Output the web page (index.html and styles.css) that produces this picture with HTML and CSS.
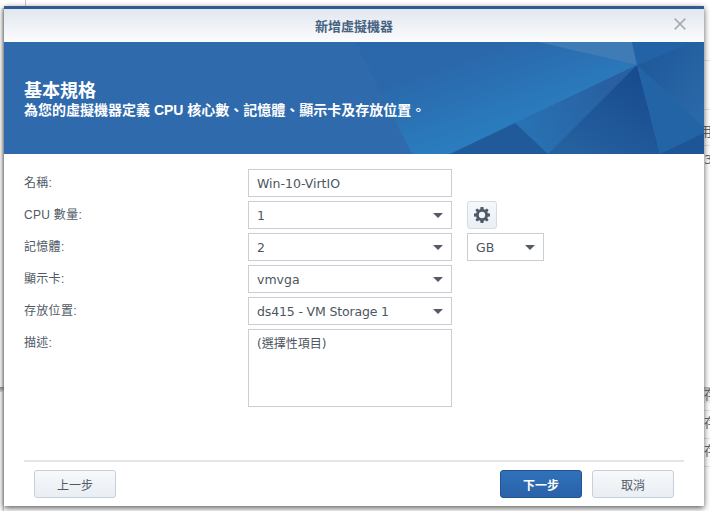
FILE: index.html
```html
<!DOCTYPE html>
<html lang="zh-Hant">
<head>
<meta charset="utf-8">
<title>新增虛擬機器</title>
<link rel="stylesheet" href="styles.css">
</head>
<body>
<div class="desktop">
  <div class="bg-vline"></div>
  <div class="bg-left-band"></div>
  <div class="bg-left-shadow"></div>
  <div class="bg-right">
    <div class="bg-line bg-line-1"></div>
    <div class="bg-line bg-line-2"></div>
    <div class="bg-line bg-line-3"></div>
    <div class="bg-band"></div>
    <div class="bg-line bg-line-4"></div>
    <div class="bg-line bg-line-5"></div>
    <div class="bg-line bg-line-6"></div>
    <span class="bg-text bg-t1">用</span>
    <span class="bg-text bg-t2">3</span>
    <span class="bg-text bg-t3">存</span>
    <span class="bg-text bg-t4">存</span>
    <span class="bg-text bg-t5">存</span>
  </div>

  <section class="modal">
    <header class="titlebar">
      <h1 class="title">新增虛擬機器</h1>
      <svg class="close" width="12" height="12" viewBox="0 0 12 12"><path d="M.7.7l10.6 10.6M11.3.7L.7 11.3" stroke="#a9adb2" stroke-width="1.7" fill="none"/></svg>
    </header>

    <div class="banner">
      <svg class="banner-art" viewBox="4 42 700 112" width="700" height="112" preserveAspectRatio="none">
        <defs>
          <linearGradient id="gMid" x1="490" y1="50" x2="515" y2="123" gradientUnits="userSpaceOnUse">
            <stop offset="0" stop-color="#2a68ab"/>
            <stop offset="1" stop-color="#2a7cbe"/>
          </linearGradient>
          <linearGradient id="gDark" x1="630" y1="70" x2="580" y2="154" gradientUnits="userSpaceOnUse">
            <stop offset="0" stop-color="#184c8f"/>
            <stop offset="1" stop-color="#25609f"/>
          </linearGradient>
          <linearGradient id="gRight" x1="640" y1="70" x2="704" y2="110" gradientUnits="userSpaceOnUse">
            <stop offset="0" stop-color="#1f5a9b"/>
            <stop offset="1" stop-color="#2a69a9"/>
          </linearGradient>
          <linearGradient id="gBot" x1="520" y1="125" x2="610" y2="85" gradientUnits="userSpaceOnUse">
            <stop offset="0" stop-color="#2872b3"/>
            <stop offset="1" stop-color="#2860a2"/>
          </linearGradient>
        </defs>
        <rect x="4" y="42" width="700" height="112" fill="#2f6aad"/>
        <polygon points="355,42 412,154 450,154 515,123 637,65 538,42" fill="url(#gMid)"/>
        <polygon points="515,123 637,65 548,154" fill="url(#gBot)"/>
        <polygon points="515,123 548,154 450,154" fill="#215a9b"/>
        <polygon points="637,65 548,154 660,154" fill="url(#gDark)"/>
        <polygon points="637,65 660,154 704,133 704,127" fill="#2264a6"/>
        <polygon points="660,154 704,133 704,154" fill="#1d5596"/>
        <polygon points="637,65 704,127 704,42 692,42" fill="url(#gRight)"/>
        <polygon points="538,42 632,42 637,65" fill="#3f7bb4"/>
        <polygon points="632,42 692,42 637,65" fill="#2263a7"/>
      </svg>
      <div class="banner-text">
        <h2 class="heading">基本規格</h2>
        <p class="subheading">為您的虛擬機器定義 CPU 核心數、記憶體、顯示卡及存放位置。</p>
      </div>
    </div>

    <div class="form">
      <div class="row">
        <div class="label">名稱:</div>
        <div class="field">Win-10-VirtIO</div>
      </div>
      <div class="row">
        <div class="label">CPU 數量:</div>
        <div class="field select">1<span class="caret"></span></div>
        <button class="gear-btn" type="button" aria-label="設定">
          <svg width="16" height="16" viewBox="0 0 16 16"><path fill="#4e5a68" fill-rule="evenodd" d="M6.6 0h2.8l.4 2.2 1.2.5L12.900 1.400 14.600 3.100 13.300 5 13.800 6.200 16 6.600V9.400L13.800 9.800 13.300 11 14.600 12.900 12.900 14.600 11 13.300 9.800 13.800 9.400 16H6.600L6.200 13.800 5 13.300 3.100 14.600 1.400 12.900 2.700 11 2.200 9.800 0 9.400V6.600L2.200 6.200 2.700 5 1.400 3.100 3.100 1.400 5 2.700 6.200 2.200ZM8 4.800A3.200 3.200 0 1 0 8 11.200 3.200 3.200 0 1 0 8 4.800Z"/></svg>
        </button>
      </div>
      <div class="row">
        <div class="label">記憶體:</div>
        <div class="field select">2<span class="caret"></span></div>
        <div class="field select unit">GB<span class="caret"></span></div>
      </div>
      <div class="row">
        <div class="label">顯示卡:</div>
        <div class="field select">vmvga<span class="caret"></span></div>
      </div>
      <div class="row">
        <div class="label">存放位置:</div>
        <div class="field select tight">ds415 - VM Storage 1<span class="caret"></span></div>
      </div>
      <div class="row">
        <div class="label">描述:</div>
        <div class="field area">(選擇性項目)</div>
      </div>
    </div>

    <footer class="footer">
      <button class="btn" type="button">上一步</button>
      <div class="footer-right">
        <button class="btn btn-primary" type="button">下一步</button>
        <button class="btn" type="button">取消</button>
      </div>
    </footer>
  </section>
</div>
</body>
</html>
```

FILE: styles.css
```css
* { box-sizing: border-box; }
html, body { margin: 0; padding: 0; height: 100%; background: #fff; }
body { overflow: hidden; }

.desktop {
  position: relative;
  width: 710px;
  height: 511px;
  padding: 6px 0 0 4px;
  overflow: hidden;
  font-family: "DejaVu Sans", "Noto Sans CJK TC", sans-serif;
  color: #4a5562;
}

/* Page behind the dialog */
.bg-vline { position: absolute; left: 25px; top: 0; width: 1px; height: 6px; background: #c9c9c9; }
.bg-left-band { position: absolute; left: 0; top: 8px; width: 4px; height: 503px;
  background: linear-gradient(90deg, #fff 0, #eee 50%, #c4c4c4 100%); }
.bg-left-shadow { position: absolute; left: 0; top: 387px; width: 4px; height: 5px;
  background: linear-gradient(#8f8f8f, #d8d8d8); }
.bg-right { position: absolute; left: 704px; top: 0; width: 6px; height: 511px; overflow: hidden; }
.bg-line { position: absolute; left: 0; width: 6px; height: 1px; background: #e4e4e4; }
.bg-line-1 { top: 60px; }
.bg-line-2 { top: 109px; }
.bg-line-3 { top: 145px; }
.bg-line-4 { top: 410px; }
.bg-line-5 { top: 438px; }
.bg-line-6 { top: 466px; }
.bg-band { position: absolute; left: 0; top: 387px; width: 6px; height: 16px;
  background: linear-gradient(#b9b9b9, #ececec 35%, #f2f2f2); }
.bg-text { position: absolute; left: 0; font-size: 13px; line-height: 14px; color: #5d6a75; }
.bg-t1 { top: 125px; left: -5px; }
.bg-t2 { top: 153px; }
.bg-t3 { top: 388px; }
.bg-t4 { top: 416px; }
.bg-t5 { top: 444px; }

/* Dialog */
.modal {
  position: relative;
  display: flex;
  flex-direction: column;
  width: 700px;
  height: 500px;
  border-top: 3px solid #2f5a92;
  background: #fff;
  box-shadow: 0 2px 6px rgba(0, 0, 0, .65);
}
.titlebar {
  display: flex;
  align-items: center;
  justify-content: center;
  position: relative;
  flex: none;
  height: 33px;
  background: linear-gradient(#e1e7ef, #fbfcfd);
}
.title { margin: 0; font-size: 13px; font-weight: 700; color: #46607f; line-height: 16px; font-family: "Noto Sans CJK TC", sans-serif; }
.close { position: absolute; right: 18px; top: 9px; }

.banner {
  position: relative;
  flex: none;
  height: 112px;
  background: #2f6aad;
  color: #fff;
  padding: 36px 20px 0;
}
.banner-art { position: absolute; left: 0; top: 0; display: block; }
.banner-text { position: relative; }
.heading { margin: 0; font-size: 18px; line-height: 22px; font-weight: 700; font-family: "Noto Sans CJK TC", sans-serif; }
.subheading { margin: 0; font-size: 14px; line-height: 20px; font-weight: 700; white-space: nowrap;
  font-family: "Liberation Sans", "Noto Sans CJK TC", sans-serif; }

/* Form */
.form {
  flex: none;
  display: flex;
  flex-direction: column;
  gap: 4px;
  height: 306px;
  padding: 15px 20px 0;
}
.row { display: flex; align-items: flex-start; }
.label {
  flex: none;
  width: 224px;
  height: 28px;
  font-family: "Liberation Sans", "Noto Sans CJK TC", sans-serif;
  font-size: 12px;
  letter-spacing: .3px;
  line-height: 29px;
  color: #505a66;
}
.field {
  position: relative;
  flex: none;
  width: 204px;
  height: 28px;
  padding: 0 8px;
  border: 1px solid #c9ced4;
  background: #fff;
  font-size: 12.5px;
  line-height: 27px;
  color: #4c5660;
  white-space: nowrap;
}
.tight { letter-spacing: -.15px; }
.caret {
  position: absolute;
  right: 8px;
  top: 11px;
  width: 0;
  height: 0;
  border-left: 5px solid transparent;
  border-right: 5px solid transparent;
  border-top: 5px solid #525b66;
}
.unit { width: 77px; margin-left: 15px; }
.area { height: 78px; line-height: 28px; font-size: 12px; }

.gear-btn {
  flex: none;
  display: flex;
  align-items: center;
  justify-content: center;
  width: 30px;
  height: 28px;
  margin-left: 15px;
  padding: 0;
  border: 1px solid #d5dbe2;
  border-radius: 3px;
  background: linear-gradient(#f6f8fb, #eaeff4);
}

/* Footer */
.footer {
  flex: none;
  display: flex;
  justify-content: space-between;
  margin: 0 20px;
  padding: 8px 10px 0;
  border-top: 2px solid #e3e5e8;
}
.footer-right { display: flex; gap: 10px; }
.btn {
  width: 82px;
  height: 28px;
  padding: 0;
  border: 1px solid #c6d0da;
  border-radius: 3px;
  background: linear-gradient(#f7f9fb, #e9eef3);
  font-family: "Noto Sans CJK TC", sans-serif;
  font-size: 12px;
  color: #505a66;
}
.btn-primary {
  border-color: #22558f;
  background: linear-gradient(#2f72ba, #2a62a8);
  color: #fff;
  font-weight: 700;
}
```
